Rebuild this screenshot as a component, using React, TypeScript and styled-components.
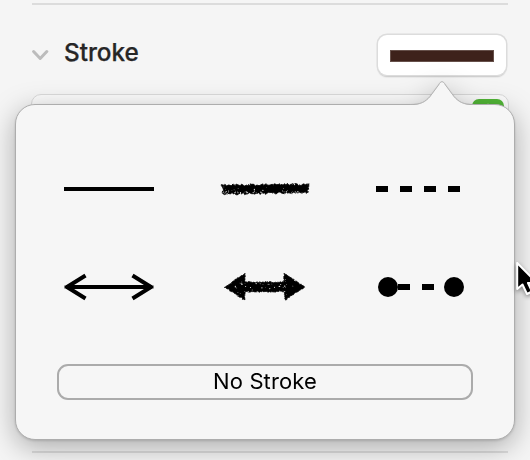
import React from 'react';
import styled, { createGlobalStyle } from 'styled-components';

const GlobalStyle = createGlobalStyle`
  * { box-sizing: border-box; }
  body {
    margin: 0;
    background: #f5f5f5;
    font-family: Inter, 'Liberation Sans', sans-serif;
    overflow: hidden;
  }
`;

const Page = styled.main`
  position: relative;
  width: 530px;
  height: 460px;
  padding: 3px 22px 0 32px;
  overflow: hidden;
  background: #f5f5f5;
`;

const Divider = styled.hr`
  width: 476px;
  height: 2px;
  margin: 0;
  border: 0;
  background: #dcdcdc;
`;

const SectionHeader = styled.header`
  display: flex;
  align-items: center;
  height: 44px;
  margin-top: 28px;
`;

const Chevron = styled.svg`
  flex: none;
  width: 17px;
  height: 12px;
`;

const Title = styled.h2`
  flex: 1;
  margin: 0 0 7px 15px;
  color: #262626;
  font-size: 24.3px;
  font-weight: 500;
  line-height: 30px;
  letter-spacing: -0.03px;
  -webkit-text-stroke: 0.25px #262626;
`;

const StrokeWell = styled.button`
  display: flex;
  align-items: center;
  justify-content: center;
  width: 128px;
  height: 40px;
  margin: 0 2px 0 0;
  padding: 1px 0 0;
  border: 0;
  border-radius: 9px;
  background: #fff;
  box-shadow: 0 0 0 1.5px #dcdcdc, 0 2px 1.5px #b8b8b8;
`;

const Swatch = styled.span`
  width: 104px;
  height: 12px;
  border: 1px solid #66504a;
  background: #3e221b;
`;

const StyleField = styled.div`
  display: flex;
  justify-content: flex-end;
  width: 478px;
  height: 38px;
  margin: 17px 0 0 -1px;
  padding: 4px 4px 0;
  border: 1.5px solid #dadada;
  border-radius: 10px;
  background: #fbfbfb;
`;

const Stepper = styled.span`
  width: 32px;
  height: 30px;
  border-radius: 7px;
  background: #52b637;
`;

const StepperArrows = styled.svg`
  display: block;
  width: 32px;
  height: 30px;
`;

const LowerDivider = styled(Divider)`
  margin-top: 319px;
`;

const Popover = styled.section`
  position: absolute;
  top: 104px;
  left: 15px;
  display: flex;
  flex-direction: column;
  width: 500px;
  height: 336px;
  padding: 34px 41px 0;
  border: 1px solid #adadad;
  border-radius: 20px;
  background: #f6f6f6;
  filter: drop-shadow(0 1px 1px rgba(0, 0, 0, 0.14)) drop-shadow(0 7px 14px rgba(0, 0, 0, 0.3));
`;

const PopoverArrow = styled.svg`
  position: absolute;
  top: -25px;
  left: 394px;
  width: 64px;
  height: 27px;
`;

const StrokeGrid = styled.div`
  display: grid;
  grid-template-columns: repeat(3, 104px);
  grid-template-rows: 98px 98px;
  column-gap: 52px;
`;

const StrokeOption = styled.button`
  padding: 0;
  border: 0;
  background: none;
`;

const Sample = styled.svg`
  display: block;
  width: 104px;
  height: 98px;
`;

const NoStroke = styled.button`
  width: 416px;
  height: 36px;
  margin: 29px 0 0;
  padding: 0 0 2px;
  border: 2px solid #ababab;
  border-radius: 11px;
  background: transparent;
  color: #000;
  font-family: inherit;
  font-size: 22px;
  line-height: 30px;
  letter-spacing: 0.12px;
`;

const Cursor = styled.svg`
  position: absolute;
  left: 515px;
  top: 259px;
  width: 28px;
  height: 40px;
  filter: drop-shadow(0 2px 2px rgba(0, 0, 0, 0.4));
`;

type Point = [number, number];

const random = (seed: number) => {
  let s = seed;
  return () => {
    s = (s * 16807) % 2147483647;
    return s / 2147483647;
  };
};

/* Walks an outline in short steps, nudging each point so the edge looks drawn in charcoal. */
const roughOutline = (points: Point[], seed: number, amount: number) => {
  const next = random(seed);
  const out: string[] = [];
  points.forEach(([x, y], i) => {
    const [x2, y2] = points[(i + 1) % points.length];
    const steps = Math.max(1, Math.round(Math.hypot(x2 - x, y2 - y) / 0.9));
    for (let k = 0; k < steps; k += 1) {
      const px = x + ((x2 - x) * k) / steps + (next() - 0.5) * amount;
      const py = y + ((y2 - y) * k) / steps + (next() - 0.5) * amount;
      out.push(`${px.toFixed(2)},${py.toFixed(2)}`);
    }
  });
  return out.join(' ');
};

const flecks = (x: number, y: number, w: number, h: number, count: number, seed: number) => {
  const next = random(seed);
  return Array.from({ length: count }, () => ({
    x: x + next() * w,
    y: y + next() * h,
    r: 0.25 + next() * 0.4,
  }));
};

const charcoalLine = roughOutline([[9.5, 46], [95.5, 45.7], [94.5, 53.5], [9.5, 55]], 71, 2.4);
const lineFlecks = [...flecks(9, 52, 85, 3, 50, 19), ...flecks(9, 47, 84, 5, 12, 43)];
const charcoalArrow = roughOutline(
  [[12, 50], [31.5, 36.8], [32.3, 45.2], [71, 45.2], [71.5, 36.8], [91.5, 50], [72, 63.2], [71, 54.6], [32.3, 54.6], [31.5, 63.2]],
  113,
  1.3,
);
const arrowFlecks = [
  ...flecks(20, 43, 12, 16, 13, 37),
  ...flecks(32, 46, 39, 9, 22, 61),
  ...flecks(70, 42, 12, 17, 13, 89),
];

const Charcoal = ({ points, specks }: { points: string; specks: { x: number; y: number; r: number }[] }) => (
  <Sample viewBox="0 0 104 98">
    <polygon points={points} stroke="#000" strokeWidth="0.8" strokeLinejoin="round" />
    <g fill="#f6f6f6">
      {specks.map((s, i) => (
        <circle key={i} cx={s.x} cy={s.y} r={s.r} />
      ))}
    </g>
  </Sample>
);

export default function App() {
  return (
    <>
      <GlobalStyle />
      <Page>
        <Divider />
        <SectionHeader>
          <Chevron viewBox="0 0 17 12" fill="none" stroke="#bcbcbc" strokeWidth="3" strokeLinecap="round" strokeLinejoin="round">
            <path d="M1.6 2.5 8.2 9.5l6.6-7" />
          </Chevron>
          <Title>Stroke</Title>
          <StrokeWell aria-label="Stroke style">
            <Swatch />
          </StrokeWell>
        </SectionHeader>
        <StyleField>
          <Stepper>
            <StepperArrows viewBox="0 0 32 30" fill="none" stroke="#fff" strokeWidth="2.5" strokeLinecap="round" strokeLinejoin="round">
              <path d="m10 12 6-6 6 6M10 18l6 6 6-6" />
            </StepperArrows>
          </Stepper>
        </StyleField>
        <LowerDivider />

        <Popover>
          <PopoverArrow viewBox="0 0 64 27">
            <path d="M0 25C11 25 15 22.5 20 17L28.5 5.5C31 1 33 1 35.5 5.5L44 17C49 22.5 53 25 64 25V27H0Z" fill="#f6f6f6" />
            <path d="M0 24.5C11 24.5 15 22 20 16.5L28.5 5C31 .5 33 .5 35.5 5L44 16.5C49 22 53 24.5 64 24.5" fill="none" stroke="#b2b2b2" />
          </PopoverArrow>
          <StrokeGrid>
            <StrokeOption aria-label="Solid line">
              <Sample viewBox="0 0 104 98">
                <path d="M7 50H97" stroke="#000" strokeWidth="4" />
              </Sample>
            </StrokeOption>
            <StrokeOption aria-label="Charcoal line">
              <Charcoal points={charcoalLine} specks={lineFlecks} />
            </StrokeOption>
            <StrokeOption aria-label="Dashed line">
              <Sample viewBox="0 0 104 98">
                <path d="M7 50H91" stroke="#000" strokeWidth="6" strokeDasharray="12 12" />
              </Sample>
            </StrokeOption>
            <StrokeOption aria-label="Line with arrows">
              <Sample viewBox="0 0 104 98" fill="none" stroke="#000" strokeWidth="4">
                <path d="M10 50H94M28.5 38.5 10 50l18.5 11.5M75.5 38.5 94 50 75.5 61.5" strokeLinejoin="bevel" />
                <path d="M7.5 50H96.5" strokeWidth="3" />
              </Sample>
            </StrokeOption>
            <StrokeOption aria-label="Charcoal arrows">
              <Charcoal points={charcoalArrow} specks={arrowFlecks} />
            </StrokeOption>
            <StrokeOption aria-label="Dashed line with round ends">
              <Sample viewBox="0 0 104 98">
                <circle cx="19" cy="50" r="10" />
                <circle cx="85" cy="50" r="10" />
                <path d="M29 50H41M53 50H65" stroke="#000" strokeWidth="6" />
              </Sample>
            </StrokeOption>
          </StrokeGrid>
          <NoStroke>No Stroke</NoStroke>
        </Popover>

        <Cursor viewBox="0 0 28 40">
          <path d="M2.2 4V30L7.5 25.5l4.5 9.5 5-2.5-4-8.5h9Z" fill="#000" stroke="#fff" strokeWidth="2" strokeLinejoin="round" />
        </Cursor>
      </Page>
    </>
  );
}
